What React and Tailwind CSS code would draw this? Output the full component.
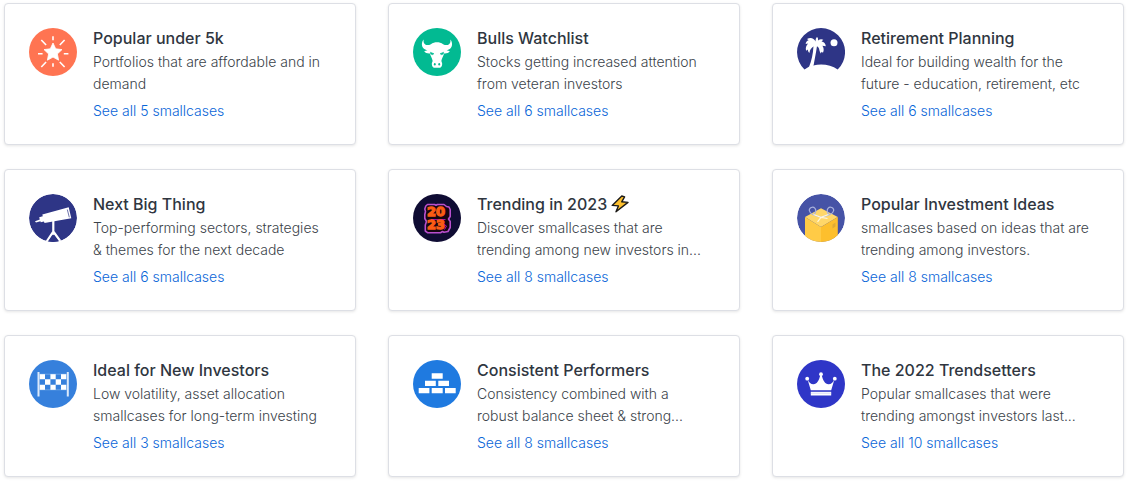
import React from 'react';

const StarIcon = () => (
  <svg viewBox="0 0 48 48" className="w-12 h-12 shrink-0" aria-hidden="true">
    <circle cx="24" cy="24" r="24" fill="#ff7452" />
    <path
      d="M24 15l2.7 5.8 6.3.8-4.6 4.3 1.2 6.3-5.6-3.1-5.6 3.1 1.2-6.3-4.6-4.3 6.3-.8z"
      fill="#fff"
      stroke="#fff"
      strokeWidth="0.8"
      strokeLinejoin="round"
    />
    <path
      d="M9 25.7h4.6M34.8 25.7h4.6M24 8.3v4M24 35.3v3.5M12.3 12l4.8 5M35.6 12l-4.8 5M12.3 39l4.8-5M35.6 39l-4.8-5"
      stroke="#fff"
      strokeWidth="1.6"
    />
  </svg>
);

const BullIcon = () => (
  <svg viewBox="0 0 48 48" className="w-12 h-12 shrink-0" aria-hidden="true">
    <circle cx="24" cy="24" r="24" fill="#02ba92" />
    <path
      d="M10.6 11.6C8.6 14 8.2 18 10.4 20.3c1.1 1.1 2.6 1.6 4 1.9-1.2.2-2.4.5-3.2 1 1 1.7 3.7 2.5 5.8 2.2.6 2.9 2.2 4.8 2.6 7.3.1 1-.9 2-.8 3.3.2 2 .9 3.4 2.1 3.8h6.2c1.2-.4 1.900-1.800 2.100-3.800.1-1.300-.9-2.300-.8-3.300.4-2.500 2-4.400 2.600-7.300 2.100.3 4.800-.5 5.800-2.200-.8-.5-2-.8-3.200-1 1.400-.3 2.900-.8 4-1.900 2.200-2.300 1.800-6.300-.2-8.700.3 3-.4 4.600-2.400 5.300-1.700.5-3.300.1-4.900-.7-1.800-1.400-4-1.900-6.100-1.900s-4.300.5-6.100 1.900c-1.600.8-3.200 1.200-4.900.7-2-.7-2.700-2.300-2.400-5.300z"
      fill="#fff"
    />
    <path d="M17.4 24.2l3.6 1.5-1.6 1-1.7-.7zM30.6 24.2L27 25.7l1.6 1 1.7-.7z" fill="#02ba92" stroke="#02ba92" strokeWidth="0.5" />
    <ellipse cx="21.8" cy="36.3" rx="0.9" ry="1.2" fill="#02ba92" />
    <ellipse cx="26.2" cy="36.3" rx="0.9" ry="1.2" fill="#02ba92" />
  </svg>
);

const PalmIcon = () => (
  <svg viewBox="0 0 48 48" className="w-12 h-12 shrink-0" aria-hidden="true">
    <path
      d="M7.5 41.5A24 24 0 1 1 40.7 41.4C34 36.8 25 35.5 16.3 37.4l-3.6.8z"
      fill="#2e3586"
    />
    <circle cx="37" cy="14.7" r="3.5" fill="#fff" />
    <path d="M16.5 18C16 26.5 14.5 32.5 12 39l4.500-1.200C17.500 32 18.800 26 20 18z" fill="#fff" />
    <path
      d="M18.500 13.500c-1.400-3.300-5-4.600-8.500-2.500l1.600 1.300c-1.800.5-2.900 2-2.900 3.800l2.400-.6C9 17.500 8.300 20.300 9.200 22.800l1.600-1.200c.1 1.500.6 2.600 1.600 3.400.5-3.300 1.800-5.500 4.600-6.800 2.300-.4 4 .4 5 2.300.4 1.700.7 3.300 1.800 4.900l.8-1.700 1.400 1c1.300-2.600.7-5-.6-7l3.400.6c-.1-2.600-1.800-4.600-4.300-4.800l1.800-1.700c-1.700-.9-3.600-.6-5.200.6.2-1.600-.3-2.600-1.100-3.300-.9.9-1.500 2.500-1.500 4.400z"
      fill="#fff"
    />
  </svg>
);

const TelescopeIcon = () => (
  <svg viewBox="0 0 48 48" className="w-12 h-12 shrink-0" aria-hidden="true">
    <defs>
      <clipPath id="telescope-clip">
        <circle cx="24" cy="24" r="24" />
      </clipPath>
    </defs>
    <g clipPath="url(#telescope-clip)">
      <circle cx="24" cy="24" r="24" fill="#2e3586" />
      <path
        d="M6 27.2l4.8-1.8-.6-2.2 3.6-1-.5-1.8 26.4-7.2 2.6 11-26.8 4.7-.5-1.5-3.200.8-.4-1-4.400 1.300z"
        fill="#fff"
      />
      <path d="M38.3 15.5l2 7.8" stroke="#2e3586" strokeWidth="0.7" />
      <path d="M24.3 27v11.5M24.3 37.5L17 48.5M24.3 37.5l8 11" stroke="#fff" strokeWidth="2.2" fill="none" />
      <path d="M22.3 39h4l-2 3z" fill="#fff" />
      <path d="M24.3 40.5L18.8 48h11.5z" fill="#2e3586" />
    </g>
  </svg>
);

const YearIcon = () => (
  <svg viewBox="0 0 48 48" className="w-12 h-12 shrink-0" aria-hidden="true">
    <circle cx="24" cy="24" r="24" fill="#0f0c33" />
    <path
      d="M14.5 10.5h7l1.5.8 1.5-.8H31l2.5 2 2.5.5 1.2 2.5v7l-1.7 2.5 1.7 2.5v6L35 37.5l-4 .8-1.5-.8-2 1.2H14.5L12.3 37v-6l1.2-3.5-1.7-3v-4l.7-3-.7-2.5 1-3z"
      fill="#160612"
      stroke="#b94fce"
      strokeWidth="1.6"
      strokeLinejoin="round"
    />
    <path d="M18 25.5h14.5M30.500 30l3 2-2 3.500" fill="none" stroke="#b414b8" strokeWidth="0.9" />
    <g
      fontFamily="'DejaVu Sans', sans-serif"
      fontWeight="700"
      fontSize="13"
      textAnchor="middle"
      fill="#fb5c14"
      stroke="#fb5c14"
      strokeWidth="1.3"
    >
      <text x="23" y="22">20</text>
      <text x="23" y="35">23</text>
    </g>
  </svg>
);

const GiftIcon = () => (
  <svg viewBox="0 0 48 48" className="w-12 h-12 shrink-0" aria-hidden="true">
    <defs>
      <clipPath id="gift-clip">
        <circle cx="24" cy="24" r="24" />
      </clipPath>
    </defs>
    <g clipPath="url(#gift-clip)">
      <circle cx="24" cy="24" r="24" fill="#4653a6" />
      <path d="M24 14.3L40.8 23 24 33 8 23z" fill="#ffd769" />
      <path d="M8 23l16 10v15H8z" fill="#ffcb46" />
      <path d="M40.8 23L24 33v15h16.8z" fill="#fdbf2d" />
      <path d="M35.5 30.5l3-2v4l-3 2z" fill="#e0ab36" />
      <g fill="none" strokeWidth="1.2">
        <path d="M23.5 22.8c-4-.6-10.500-2.600-11.200-6.300-.3-3 3.700-4.400 5.700-2.200 1.600 2 .6 4.300-.8 6.200" stroke="#a9b1dc" />
        <path d="M24.5 22.8c4-.6 11.500-2.600 12.200-6.300.3-3-3.700-4.400-5.700-2.200-1.600 2-.6 4.300.8 6.200" stroke="#a9b1dc" />
        <path d="M16.5 20.5l7.5 2.8 7.5-2.8M24 23.3l-3.500 4.500M24 23.3l6.500 1.200" stroke="#fff6dd" />
      </g>
    </g>
  </svg>
);

const FlagIcon = () => (
  <svg viewBox="0 0 48 48" className="w-12 h-12 shrink-0" aria-hidden="true">
    <circle cx="24" cy="24" r="24" fill="#3680dc" />
    <path d="M9.5 12v24.5M38.8 12v24.5" stroke="#dce9fa" strokeWidth="2" />
    <path
      d="M10.7 14H16v5.3h-5.300zM21.400 14h5.300v5.300h-5.300zM32 14h5.300v5.300H32zM16 19.300h5.400v5.400H16zM26.700 19.300H32v5.400h-5.300zM10.700 24.700H16V30h-5.300zM21.400 24.700h5.300V30h-5.300zM32 24.700h5.300V30H32z"
      fill="#fff"
    />
    <path d="M10.5 14.2h27M10.5 29.8h27" stroke="#9fc3ef" strokeWidth="0.5" />
  </svg>
);

const BricksIcon = () => (
  <svg viewBox="0 0 48 48" className="w-12 h-12 shrink-0" aria-hidden="true">
    <circle cx="24" cy="24" r="24" fill="#1f7ae0" />
    <path
      d="M18.700 13.300h11v5.400h-11zM12 20.700h10.800V26H12zM25.300 20.700H36V26H25.300zM5.700 28h10.700v5.300H5.700zM18.700 28h11v5.300h-11zM32 28h10.700v5.300H32z"
      fill="#fff"
    />
  </svg>
);

const CrownIcon = () => (
  <svg viewBox="0 0 48 48" className="w-12 h-12 shrink-0" aria-hidden="true">
    <circle cx="24" cy="24" r="24" fill="#2f36c7" />
    <g fill="#fff">
      <circle cx="10.2" cy="18.7" r="1.9" />
      <circle cx="24" cy="14.2" r="1.9" />
      <circle cx="37.8" cy="18.7" r="1.9" />
      <path d="M13.800 30.300L10.600 19.500c1.400 3 3.400 4.800 5.900 4.700 3.500-.2 5.700-4 6.700-9h1.600c1 5 3.200 8.800 6.700 9 2.500.1 4.500-1.700 5.900-4.700l-3.200 10.800z" />
      <path d="M13.800 31.800h20.400v3.700H13.800z" />
    </g>
    <path d="M13.800 33.200h20.400" stroke="#c3c5f0" strokeWidth="0.6" />
  </svg>
);

const BoltIcon = () => (
  <svg viewBox="0 0 18 18" className="w-[18px] h-[18px]" aria-hidden="true">
    <path
      d="M10.8 1L1.2 10.4l6.2.5L5 16.8 17 7.4l-6.3-.6L13.6 1.800z"
      fill="#fdc02f"
      stroke="#1c1a17"
      strokeWidth="1.4"
      strokeLinejoin="round"
    />
  </svg>
);

const collections = [
  { title: 'Popular under 5k', text: 'Portfolios that are affordable and in demand', count: 5, Icon: StarIcon },
  { title: 'Bulls Watchlist', text: 'Stocks getting increased attention from veteran investors', count: 6, Icon: BullIcon },
  { title: 'Retirement Planning', text: 'Ideal for building wealth for the future - education, retirement, etc', count: 6, Icon: PalmIcon },
  { title: 'Next Big Thing', text: 'Top-performing sectors, strategies & themes for the next decade', count: 6, Icon: TelescopeIcon },
  { title: 'Trending in 2023', text: 'Discover smallcases that are trending among new investors in...', count: 8, Icon: YearIcon, hot: true },
  { title: 'Popular Investment Ideas', text: 'smallcases based on ideas that are trending among investors.', count: 8, Icon: GiftIcon },
  { title: 'Ideal for New Investors', text: 'Low volatility, asset allocation smallcases for long-term investing', count: 3, Icon: FlagIcon },
  { title: 'Consistent Performers', text: 'Consistency combined with a robust balance sheet & strong...', count: 8, Icon: BricksIcon },
  { title: 'The 2022 Trendsetters', text: 'Popular smallcases that were trending amongst investors last...', count: 10, Icon: CrownIcon },
];

const CollectionCard = ({ title, text, count, Icon, hot }) => (
  <article className="flex gap-4 p-6 bg-white border border-[#dddfe5] rounded shadow-[0_1px_3px_rgba(0,0,0,0.1)]">
    <Icon />
    <div className="min-w-0 flex-1">
      <h2 className="flex items-center gap-1 text-base leading-5 font-medium text-[#2f363f]">
        {title}
        {hot && <BoltIcon />}
      </h2>
      <p className="mt-[3px] pr-1 text-sm leading-[22px] font-light text-[#3b434a]">{text}</p>
      <a href="#" className="block mt-[7px] text-sm leading-[18px] font-light text-[#0a66d8] hover:underline">
        See all {count} smallcases
      </a>
    </div>
  </article>
);

const App = () => {
  return (
    <main className="pt-[3px] pb-1.5 pl-1 pr-[5px] bg-white font-['Inter',sans-serif]">
      <div className="grid grid-cols-3 gap-x-8 gap-y-6">
        {collections.map(item => (
          <CollectionCard key={item.title} {...item} />
        ))}
      </div>
    </main>
  );
};

export default App;
